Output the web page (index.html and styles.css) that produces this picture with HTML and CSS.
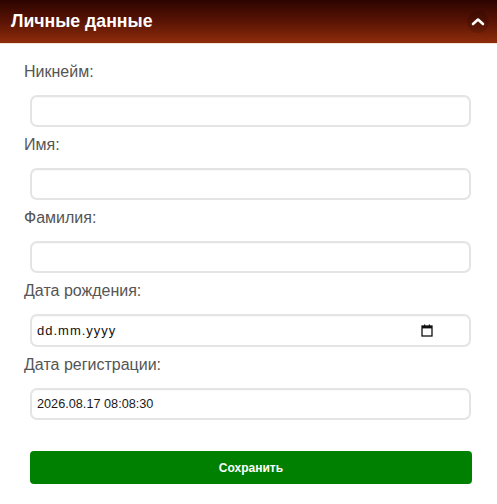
FILE: index.html
```html
<!DOCTYPE html>
<html lang="ru">
<head>
<meta charset="utf-8">
<title>Личные данные</title>
<link rel="stylesheet" href="styles.css">
</head>
<body>
<section class="panel">
  <header class="panel-header">
    <h2 class="panel-title">Личные данные</h2>
    <button class="collapse-btn" type="button" aria-label="Свернуть">
      <svg width="14" height="9" viewBox="0 0 14 9"><path d="M2 7 L7 2.5 L12 7" fill="none" stroke="#fff" stroke-width="2.6" stroke-linecap="round" stroke-linejoin="round"/></svg>
    </button>
  </header>
  <form class="panel-body">
    <div class="field">
      <label class="field-label">Никнейм:</label>
      <input class="field-input" type="text">
    </div>
    <div class="field">
      <label class="field-label">Имя:</label>
      <input class="field-input" type="text">
    </div>
    <div class="field">
      <label class="field-label">Фамилия:</label>
      <input class="field-input" type="text">
    </div>
    <div class="field">
      <label class="field-label">Дата рождения:</label>
      <div class="field-input date-input">
        <span class="date-text">dd.mm.yyyy</span>
        <svg class="cal-icon" width="12" height="13" viewBox="0 0 12 13"><rect x="1" y="2" width="10" height="10" fill="none" stroke="#111" stroke-width="1.3"/><rect x="1" y="2" width="10" height="2.4" fill="#111"/><rect x="3" y="0.5" width="1.2" height="2" fill="#111"/><rect x="7.8" y="0.5" width="1.2" height="2" fill="#111"/></svg>
      </div>
    </div>
    <div class="field">
      <label class="field-label">Дата регистрации:</label>
      <input class="field-input" type="text" value="2026.08.17 08:08:30">
    </div>
    <button class="save-btn" type="button">Сохранить</button>
  </form>
</section>
</body>
</html>
```
FILE: styles.css
```css
html, body {
  margin: 0;
  padding: 0;
  background: #fff;
}
body {
  font-family: "Liberation Sans", Arial, Helvetica, sans-serif;
  width: 497px;
}
.panel {
  width: 497px;
}
.panel-header {
  height: 44px;
  box-sizing: border-box;
  display: flex;
  align-items: center;
  justify-content: space-between;
  padding: 0 8px 1px 11px;
  background: linear-gradient(to bottom, #2c0400 0%, #5a1404 50%, #8e2c0b 100%);
  border-bottom: 1px solid #f2e6da;
}
.panel-title {
  margin: 0;
  color: #fff;
  font-size: 17.7px;
  font-weight: bold;
  line-height: 20px;
}
.collapse-btn {
  width: 22px;
  height: 22px;
  border: 0;
  padding: 0;
  margin-top: 1px;
  border-radius: 50%;
  background: rgba(0, 0, 0, 0.12);
  display: flex;
  align-items: center;
  justify-content: center;
}
.panel-body {
  display: flex;
  flex-direction: column;
  padding: 19px 24px 0 24px;
  margin: 0;
}
.field {
  display: flex;
  flex-direction: column;
  margin-bottom: 9px;
}
.field-label {
  font-size: 16px;
  line-height: 18px;
  color: #555;
  margin-bottom: 14px;
}
.field-input {
  box-sizing: border-box;
  margin-left: 6px;
  width: 441px;
  height: 32px;
  border: 2px solid #e4e4e4;
  border-radius: 7px;
  background: #fff;
  padding: 0 5px;
  font-family: "Liberation Sans", Arial, Helvetica, sans-serif;
  font-size: 12.7px;
  color: #1a1a1a;
  outline: none;
  box-shadow: inset 0 1px 1px rgba(0,0,0,0.03);
}
.date-input {
  display: flex;
  align-items: center;
  justify-content: space-between;
  padding: 0 36px 0 5px;
  height: 33px;
}
.date-text {
  letter-spacing: 1px;
  font-size: 13px;
  color: #111;
}
.cal-icon {
  display: block;
}
.save-btn {
  margin: 22px 0 0 6px;
  width: 442px;
  height: 33px;
  border: 0;
  border-radius: 4px;
  background: #008000;
  color: #fff;
  font-family: "Liberation Sans", Arial, Helvetica, sans-serif;
  font-size: 12px;
  font-weight: bold;
}
```
